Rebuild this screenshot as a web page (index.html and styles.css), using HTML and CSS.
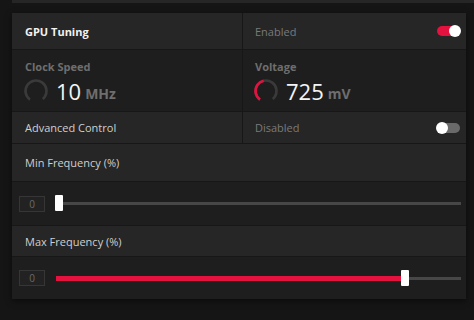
FILE: index.html
```html
<!DOCTYPE html>
<html lang="en">
<head>
  <meta charset="UTF-8" />
  <title>GPU Tuning</title>
  <link rel="stylesheet" href="styles.css">
</head>
<body>
  <div class="topbar"></div>
  <div class="panel">
    <div class="grid">
      <div class="cell head row1"><b>GPU Tuning</b></div>
      <div class="cell head row1 right">
        <span class="muted">Enabled</span>
        <span class="toggle on"><span class="knob"></span></span>
      </div>

      <div class="cell stat">
        <div class="stat-label">Clock Speed</div>
        <div class="stat-value">
          <svg class="gauge" width="26" height="26" viewBox="0 0 26 26">
            <circle cx="13" cy="13" r="10.5" fill="none" stroke="#3a3a3a" stroke-width="2.6" stroke-dasharray="52 14" transform="rotate(125 13 13)" />
          </svg>
          <span class="num">10</span><span class="unit">MHz</span>
        </div>
      </div>
      <div class="cell stat right">
        <div class="stat-label">Voltage</div>
        <div class="stat-value">
          <svg class="gauge" width="26" height="26" viewBox="0 0 26 26">
            <circle cx="13" cy="13" r="10.5" fill="none" stroke="#3a3a3a" stroke-width="2.6" stroke-dasharray="52 14" transform="rotate(125 13 13)" />
            <circle cx="13" cy="13" r="10.5" fill="none" stroke="#e3123f" stroke-width="2.6" stroke-dasharray="24 66" transform="rotate(125 13 13)" />
          </svg>
          <span class="num">725</span><span class="unit">mV</span>
        </div>
      </div>

      <div class="cell head row3"><span class="light">Advanced Control</span></div>
      <div class="cell head row3 right">
        <span class="muted">Disabled</span>
        <span class="toggle"><span class="knob"></span></span>
      </div>
    </div>

    <div class="head row4"><span class="light">Min Frequency (%)</span></div>
    <div class="slider-row">
      <div class="box">0</div>
      <div class="track">
        <div class="fill" style="width: 0%"></div>
        <div class="thumb" style="left: 0%"></div>
      </div>
    </div>

    <div class="head row6"><span class="light">Max Frequency (%)</span></div>
    <div class="slider-row last">
      <div class="box">0</div>
      <div class="track">
        <div class="fill" style="width: 85.5%"></div>
        <div class="thumb" style="left: 85.5%"></div>
      </div>
    </div>
  </div>
</body>
</html>
```

FILE: styles.css
```css
body {
  margin: 0;
  background: #151515;
  font-family: "Open Sans", "Noto Sans", sans-serif;
  font-size: 11px;
  color: #ddd;
  height: 320px;
  overflow: hidden;
}
.topbar {
  height: 3px;
  margin-left: 12px;
  background: #262626;
}
.panel {
  margin: 10px 8px 0 12px;
  background: #1e1e1e;
  box-shadow: 0 2px 6px rgba(0,0,0,0.5);
}
.grid {
  display: grid;
  grid-template-columns: 230px 1fr;
}
.cell {
  display: flex;
  align-items: center;
  padding: 0 13px;
  border-bottom: 1px solid #171717;
}
.cell.right {
  border-left: 1px solid #171717;
  padding: 0 6px 0 12px;
  justify-content: space-between;
}
.head {
  background: #262626;
}
.row1 { height: 36px; }
.row1 b { color: #f2f2f2; font-weight: 700; }
.row3 { height: 31px; }
.row4, .row6 {
  display: flex;
  align-items: center;
  padding: 0 13px;
  border-bottom: 1px solid #171717;
}
.row4 { height: 37px; }
.row6 { height: 30px; }
.muted { color: #7a7a7a; }
.light { color: #cfcfcf; }

.toggle {
  width: 23px;
  height: 10px;
  border-radius: 5px;
  background: #6a6a6a;
  position: relative;
}
.toggle.on { background: #e3123f; }
.knob {
  position: absolute;
  top: -1px;
  left: -1px;
  width: 12px;
  height: 12px;
  border-radius: 50%;
  background: #fff;
}
.toggle.on .knob { left: 12px; }

.stat {
  height: 62px;
  flex-direction: column;
  align-items: flex-start;
  justify-content: flex-start;
  padding-top: 9px;
  box-sizing: border-box;
}
.cell.stat.right {
  justify-content: flex-start;
  padding-top: 9px;
}
.stat-label {
  font-weight: 700;
  color: #6e6e6e;
  font-size: 11px;
}
.stat-value {
  display: flex;
  align-items: center;
  margin-top: 3px;
}
.gauge { margin-right: 7px; margin-left: -2px; }
.num {
  font-size: 22px;
  color: #f4f4f4;
  line-height: 28px;
}
.unit {
  font-size: 14px;
  font-weight: 700;
  color: #6e6e6e;
  margin-left: 4px;
  margin-top: 4px;
}

.slider-row {
  display: flex;
  align-items: center;
  height: 43px;
  padding: 0 5px 0 7px;
  border-bottom: 1px solid #171717;
}
.slider-row.last { border-bottom: none; height: 42px; }
.box {
  width: 24px;
  height: 14px;
  border: 1px solid #363636;
  background: #222;
  color: #6a6a6a;
  font-size: 10px;
  line-height: 14px;
  text-align: center;
  margin-right: 11px;
}
.track {
  flex: 1;
  height: 3px;
  background: #474747;
  position: relative;
}
.fill {
  position: absolute;
  left: 0;
  top: -1px;
  height: 5px;
  background: #e3123f;
}
.thumb {
  position: absolute;
  top: -7px;
  width: 8px;
  height: 16px;
  margin-left: -1px;
  background: #fff;
  border-radius: 1px;
}
```
